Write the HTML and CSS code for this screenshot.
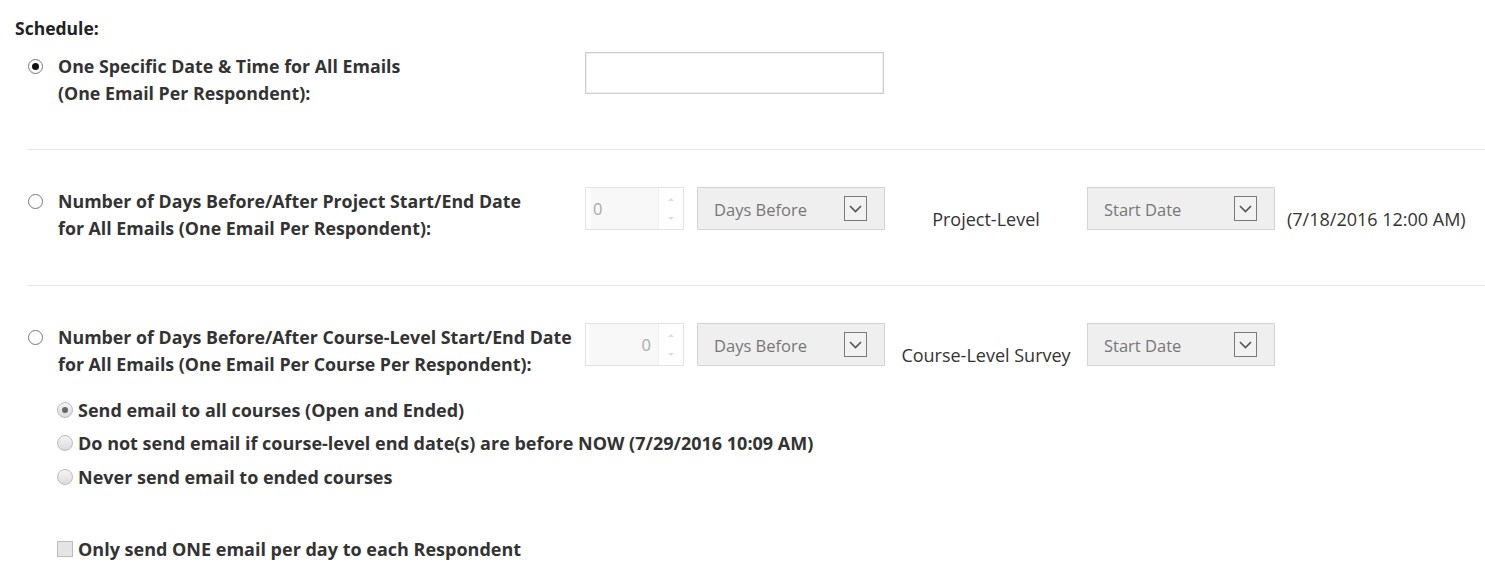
FILE: index.html
```html
<!DOCTYPE html>
<html>
<head>
<meta charset="utf-8">
<link rel="stylesheet" href="styles.css">
</head>
<body>
<div class="page">
  <div class="title">Schedule:</div>

  <div class="option first">
    <span class="radio checked"></span>
    <div class="label">One Specific Date &amp; Time for All Emails<br>(One Email Per Respondent):</div>
    <div class="controls">
      <div class="textbox"></div>
    </div>
  </div>

  <div class="option sep">
    <span class="radio"></span>
    <div class="label">Number of Days Before/After Project Start/End Date<br>for All Emails (One Email Per Respondent):</div>
    <div class="controls">
      <div class="spinner"><span class="num">0</span><span class="arrows"><svg width="10" height="30" viewBox="0 0 10 30"><path d="M2 7 L5 4 L8 7 Z" fill="#ddd"/><path d="M2 23 L5 26 L8 23 Z" fill="#ddd"/></svg></span></div>
      <div class="select"><span>Days Before</span><span class="chev"><svg width="13" height="8" viewBox="0 0 13 8"><path d="M1 1 L6.5 6.5 L12 1" fill="none" stroke="#555" stroke-width="1.6"/></svg></span></div>
      <div class="mid">Project-Level</div>
      <div class="select"><span>Start Date</span><span class="chev"><svg width="13" height="8" viewBox="0 0 13 8"><path d="M1 1 L6.5 6.5 L12 1" fill="none" stroke="#555" stroke-width="1.6"/></svg></span></div>
      <div class="date">(7/18/2016 12:00 AM)</div>
    </div>
  </div>

  <div class="option sep last">
    <span class="radio"></span>
    <div class="label">Number of Days Before/After Course-Level Start/End Date<br>for All Emails (One Email Per Course Per Respondent):</div>
    <div class="controls">
      <div class="spinner right"><span class="num">0</span><span class="arrows"><svg width="10" height="30" viewBox="0 0 10 30"><path d="M2 7 L5 4 L8 7 Z" fill="#ddd"/><path d="M2 23 L5 26 L8 23 Z" fill="#ddd"/></svg></span></div>
      <div class="select"><span>Days Before</span><span class="chev"><svg width="13" height="8" viewBox="0 0 13 8"><path d="M1 1 L6.5 6.5 L12 1" fill="none" stroke="#555" stroke-width="1.6"/></svg></span></div>
      <div class="mid">Course-Level Survey</div>
      <div class="select"><span>Start Date</span><span class="chev"><svg width="13" height="8" viewBox="0 0 13 8"><path d="M1 1 L6.5 6.5 L12 1" fill="none" stroke="#555" stroke-width="1.6"/></svg></span></div>
    </div>
  </div>

  <div class="subs">
    <div class="sub"><span class="sradio checked"></span><span>Send email to all courses (Open and Ended)</span></div>
    <div class="sub"><span class="sradio"></span><span>Do not send email if course-level end date(s) are before NOW (7/29/2016 10:09 AM)</span></div>
    <div class="sub"><span class="sradio"></span><span>Never send email to ended courses</span></div>
  </div>

  <div class="sub check"><span class="cbox"></span><span>Only send ONE email per day to each Respondent</span></div>
</div>
</body>
</html>
```

FILE: styles.css
```css
html, body {
  margin: 0;
  padding: 0;
  background: #fff;
}
body {
  font-family: "Open Sans", "Noto Sans", sans-serif;
  color: #333;
}
.page {
  padding: 17px 0 0 15px;
}
.title {
  font-weight: 700;
  font-size: 17.5px;
  line-height: 22px;
  color: #222;
}
.option {
  display: flex;
  align-items: flex-start;
  margin-left: 12px;
}
.option.first {
  padding-top: 13px;
  padding-bottom: 42px;
}
.option.sep {
  border-top: 1px solid #e8e8e8;
  padding-top: 37px;
  padding-bottom: 43px;
}
.option.last {
  padding-bottom: 15px;
}
.radio {
  flex: none;
  width: 13px;
  height: 13px;
  border: 1px solid #777;
  border-radius: 50%;
  margin: 7px 15px 0 1px;
  background: #fff;
  position: relative;
}
.radio.checked::after {
  content: "";
  position: absolute;
  left: 3px;
  top: 3px;
  width: 7px;
  height: 7px;
  border-radius: 50%;
  background: #111;
}
.label {
  width: 527px;
  flex: none;
  font-weight: 700;
  font-size: 17.8px;
  line-height: 27px;
  color: #333;
  margin-top: 1px;
  white-space: nowrap;
}
.controls {
  display: flex;
  align-items: flex-start;
}
.textbox {
  width: 297px;
  height: 40px;
  border: 1px solid #ccc;
  box-shadow: inset 0 0 0 1px #f0f0f0;
  background: #fff;
}
.spinner {
  width: 97px;
  height: 41px;
  border: 1px solid #e2e2e2;
  background: #fff;
  display: flex;
  box-sizing: content-box;
  margin-right: 13px;
}
.spinner .num {
  flex: 1;
  background: #f8f8f8;
  margin-left: 5px;
  padding-left: 2px;
  font-size: 16.5px;
  line-height: 41px;
  color: #aaa;
  border-right: 1px solid #f0f0f0;
}
.spinner.right .num {
  text-align: right;
  padding-right: 7px;
  padding-left: 0;
  margin-left: 3px;
}
.spinner .arrows {
  width: 24px;
  display: flex;
  align-items: center;
  justify-content: center;
}
.select {
  width: 186px;
  height: 41px;
  border: 1px solid #d4d4d4;
  background: #efefef;
  display: flex;
  align-items: center;
  justify-content: space-between;
  box-sizing: content-box;
  padding: 0;
}
.select span:first-child {
  padding-left: 16px;
  padding-top: 2px;
  font-size: 16.5px;
  color: #777;
}
.chev {
  width: 23px;
  height: 25px;
  border: 1px solid #7a7a7a;
  background: #f2f2f2;
  margin-right: 17px;
  display: flex;
  align-items: center;
  justify-content: center;
  box-sizing: border-box;
}
.mid {
  width: 202px;
  text-align: center;
  font-size: 18px;
  color: #333;
  padding-top: 20px;
  line-height: 24px;
}
.date {
  padding-left: 12px;
  padding-top: 20px;
  font-size: 18px;
  line-height: 24px;
  color: #333;
  white-space: nowrap;
}
.subs {
  margin-left: 42px;
  display: flex;
  flex-direction: column;
}
.sub {
  display: flex;
  align-items: center;
  height: 33.5px;
  font-weight: 700;
  font-size: 18px;
  color: #333;
  white-space: nowrap;
}
.sradio {
  width: 14px;
  height: 14px;
  border-radius: 50%;
  border: 1px solid #bcbcbc;
  background: linear-gradient(#f4f4f4, #dcdcdc);
  margin-right: 5px;
  position: relative;
  flex: none;
}
.sradio.checked::after {
  content: "";
  position: absolute;
  left: 4px;
  top: 4px;
  width: 6px;
  height: 6px;
  border-radius: 50%;
  background: #666;
}
.check {
  margin-left: 42px;
  margin-top: 39px;
}
.cbox {
  width: 14px;
  height: 14px;
  border: 1px solid #bbb;
  background: #e4e4e4;
  margin-right: 5px;
  flex: none;
}
```
